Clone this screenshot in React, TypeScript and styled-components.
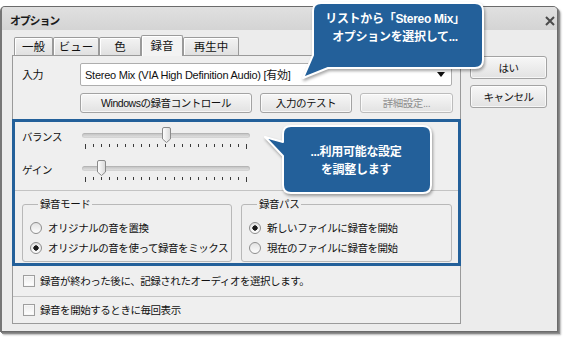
import React from "react";
import styled, { createGlobalStyle } from "styled-components";

const BLUE = "#23609a";

const GlobalStyle = createGlobalStyle`
  html, body { margin: 0; padding: 0; background: #ffffff; }
  body {
    font-family: "Liberation Sans", "Noto Sans CJK JP", sans-serif;
    font-size: 10.5px;
    letter-spacing: -0.45px;
    color: #111;
  }
  * { box-sizing: border-box; }
`;

const Page = styled.div`
  position: relative;
  width: 563px;
  height: 337px;
  padding-top: 6px;
  overflow: hidden;
`;

const Window = styled.div`
  width: 558px;
  height: 326px;
  border: 1px solid #6b6b6b;
  border-left: 2px solid #767676;
  border-radius: 5px 5px 0 0;
  background: #ececec;
  box-shadow: 1px 1px 0 #7c7c7c, 2px 2px 0 #8e8e8e, 3px 3px 2px rgba(0, 0, 0, 0.3);
  display: flex;
  flex-direction: column;
  overflow: hidden;
`;

const TitleBar = styled.div`
  height: 23px;
  flex: none;
  display: flex;
  justify-content: space-between;
  align-items: flex-start;
  padding: 6px 0 0 8px;
  background: linear-gradient(#e0e0e0, #d4d4d4);
`;

const Title = styled.div`
  font-weight: bold;
  font-size: 11px;
  letter-spacing: -1.2px;
  line-height: 16px;
  color: #1a1a1a;
`;

const CloseIcon = styled.svg`
  width: 10px;
  height: 10px;
  margin: 3px 2px 0 0;
`;

const Body = styled.div`
  flex: 1;
  display: flex;
  padding: 5px 10px 0 10px;
`;

const Main = styled.div`
  width: 449px;
  display: flex;
  flex-direction: column;
`;

const TabStrip = styled.div`
  display: flex;
  align-items: flex-end;
  height: 21px;
  padding-left: 2px;
  margin-bottom: -1px;
`;

const Tab = styled.div<{ $w: number; $active?: boolean }>`
  width: ${(p) => p.$w}px;
  height: ${(p) => (p.$active ? 21 : 19)}px;
  border: 1px solid #9a9a9a;
  border-bottom: none;
  border-radius: 2px 2px 0 0;
  background: ${(p) => (p.$active ? "#f3f3f3" : "linear-gradient(#f3f3f3, #dfdfdf)")};
  box-shadow: inset 1px 1px 0 #ffffff;
  display: flex;
  align-items: center;
  justify-content: center;
  font-size: 11.5px;
  letter-spacing: 0;
  line-height: 14px;
  position: ${(p) => (p.$active ? "relative" : "static")};
  z-index: ${(p) => (p.$active ? 2 : "auto")};
`;

const Panel = styled.div`
  position: relative;
  z-index: 1;
  height: 269px;
  border: 1px solid #9a9a9a;
  background: #efefef;
  display: flex;
  flex-direction: column;
`;

const InputRow = styled.div`
  display: flex;
  align-items: center;
  padding: 7px 0 0 9px;
`;

const FieldLabel = styled.div`
  width: 58px;
  line-height: 14px;
  font-size: 11px;
`;

const Select = styled.div`
  width: 372px;
  height: 23px;
  border: 1px solid #aeaeae;
  border-radius: 2px;
  background: #ffffff;
  display: flex;
  align-items: center;
  justify-content: space-between;
  padding: 0 6px 0 4px;
  line-height: 14px;
  font-size: 11px;
  letter-spacing: -0.25px;
`;

const Arrow = styled.svg`
  width: 8px;
  height: 5px;
`;

const ButtonRow = styled.div`
  display: flex;
  gap: 8px;
  padding-left: 67px;
  margin-top: 7px;
`;

const Button = styled.div<{ $w: number; $h?: number; $disabled?: boolean }>`
  width: ${(p) => p.$w}px;
  height: ${(p) => p.$h ?? 20}px;
  border: 1px solid ${(p) => (p.$disabled ? "#bcbcbc" : "#a3a3a3")};
  border-radius: 3px;
  background: linear-gradient(#f7f7f7, #e2e2e2);
  box-shadow: inset 0 0 0 1px rgba(255, 255, 255, 0.7);
  display: flex;
  align-items: center;
  justify-content: center;
  color: ${(p) => (p.$disabled ? "#8e8e8e" : "#111")};
  line-height: 14px;
`;

const Highlight = styled.div`
  margin: 6px -1px 0;
  height: 147px;
  border: 3px solid ${BLUE};
  display: flex;
  flex-direction: column;
`;

const SliderRow = styled.div<{ $mt: number }>`
  display: flex;
  padding-left: 7px;
  margin-top: ${(p) => p.$mt}px;
`;

const SliderLabel = styled.div`
  width: 60px;
  margin-top: 3px;
  line-height: 14px;
`;

const SliderBox = styled.div`
  position: relative;
  width: 168px;
  height: 22px;
`;

const Track = styled.div`
  margin-top: 6px;
  height: 5px;
  border-radius: 3px;
  background: linear-gradient(#bdbdbd, #e6e6e6);
  box-shadow: inset 0 0 0 1px rgba(0, 0, 0, 0.06);
`;

const Ticks = styled.div`
  display: flex;
  justify-content: space-between;
  align-items: flex-start;
  padding: 0 3px;
  margin-top: 6px;
`;

const Tick = styled.div<{ $long?: boolean }>`
  width: 1px;
  height: ${(p) => (p.$long ? 5 : 3)}px;
  background: #3a3a3a;
`;

const Thumb = styled.svg`
  position: absolute;
  top: 0;
  width: 9px;
  height: 16px;
`;

const Divider = styled.div<{ $mt?: number }>`
  height: 1px;
  flex: none;
  margin-top: ${(p) => p.$mt ?? 0}px;
  background: #c3c3c3;
`;

const Groups = styled.div`
  display: flex;
  gap: 9px;
  padding-left: 7px;
  margin-top: 6px;
`;

const Group = styled.fieldset<{ $w: number }>`
  width: ${(p) => p.$w}px;
  margin: 0;
  padding: 7px 0 3px 7px;
  border: 1px solid #b8b8b8;
  border-radius: 3px;
  min-width: 0;
`;

const Legend = styled.legend`
  margin-left: 8px;
  padding: 0 2px;
  line-height: 14px;
`;

const OptionRow = styled.div`
  height: 20px;
  display: flex;
  align-items: center;
  gap: 6px;
  line-height: 14px;
  white-space: nowrap;
`;

const Radio = styled.div<{ $on?: boolean }>`
  width: 12px;
  height: 12px;
  flex: none;
  border-radius: 50%;
  border: 1px solid #8d8d8d;
  background: ${(p) =>
    p.$on
      ? "radial-gradient(circle at 50% 50%, #1b1b1b 0 2.4px, transparent 2.9px), linear-gradient(#e2e2e2, #fdfdfd)"
      : "linear-gradient(#e2e2e2, #fdfdfd)"};
`;

const CheckRow = styled.div<{ $h?: number }>`
  height: ${(p) => (p.$h ? `${p.$h}px` : "auto")};
  flex: ${(p) => (p.$h ? "none" : 1)};
  display: flex;
  align-items: center;
  gap: 5px;
  padding-left: 10px;
  line-height: 14px;
  white-space: nowrap;
`;

const CheckBox = styled.div`
  width: 12px;
  height: 12px;
  flex: none;
  border: 1px solid #9e9e9e;
  background: linear-gradient(#ececec, #ffffff);
  box-shadow: inset 0 0 0 1px #f7f7f7;
`;

const Side = styled.div`
  display: flex;
  flex-direction: column;
  gap: 6px;
  margin-left: 9px;
  padding-top: 21px;
  width: 77px;
`;

const Callout = styled.div<{ $x: number; $y: number; $w: number; $h: number }>`
  position: absolute;
  z-index: 10;
  left: ${(p) => p.$x}px;
  top: ${(p) => p.$y}px;
  width: ${(p) => p.$w}px;
  height: ${(p) => p.$h}px;
`;

const CalloutShape = styled.svg`
  position: absolute;
  left: 0;
  top: 0;
  width: 100%;
  height: 100%;
  overflow: visible;
  filter: drop-shadow(1px 2px 1.5px rgba(0, 0, 0, 0.35));
`;

const CalloutText = styled.div<{ $left: number; $w: number; $top: number }>`
  position: relative;
  margin-left: ${(p) => p.$left}px;
  width: ${(p) => p.$w}px;
  padding-top: ${(p) => p.$top}px;
  text-align: center;
  color: #ffffff;
  font-weight: bold;
  font-size: 12px;
  letter-spacing: -0.3px;
  line-height: 18px;
  white-space: nowrap;
`;

const TICKS = Array.from({ length: 21 }, (_, i) => i);

function Slider({ pos }: { pos: number }) {
  const left = 3 + (pos * 162) / 20 - 4;
  return (
    <SliderBox>
      <Track />
      <Ticks>
        {TICKS.map((i) => (
          <Tick key={i} $long={i === 0 || i === 20} />
        ))}
      </Ticks>
      <Thumb viewBox="0 0 9 16" style={{ left }}>
        <defs>
          <linearGradient id={`tg${pos}`} x1="0" y1="0" x2="1" y2="0">
            <stop offset="0" stopColor="#ffffff" />
            <stop offset="1" stopColor="#d9d9d9" />
          </linearGradient>
        </defs>
        <path
          d="M0.5 2 Q0.5 0.5 2 0.5 H7 Q8.5 0.5 8.5 2 V12 L4.5 15.5 L0.5 12 Z"
          fill={`url(#tg${pos})`}
          stroke="#8a8a8a"
        />
      </Thumb>
    </SliderBox>
  );
}

export default function App() {
  return (
    <Page>
      <GlobalStyle />
      <Window>
        <TitleBar>
          <Title>オプション</Title>
          <CloseIcon viewBox="0 0 10 10">
            <path d="M1 1 L9 9 M9 1 L1 9" stroke="#4a4a4a" strokeWidth="2" />
          </CloseIcon>
        </TitleBar>
        <Body>
          <Main>
            <TabStrip>
              <Tab $w={39}>一般</Tab>
              <Tab $w={46}>ビュー</Tab>
              <Tab $w={42}>色</Tab>
              <Tab $w={42} $active>
                録音
              </Tab>
              <Tab $w={56}>再生中</Tab>
            </TabStrip>
            <Panel>
              <InputRow>
                <FieldLabel>入力</FieldLabel>
                <Select>
                  <span>Stereo Mix (VIA High Definition Audio) [有効]</span>
                  <Arrow viewBox="0 0 8 5">
                    <path d="M0 0 H8 L4 5 Z" fill="#111" />
                  </Arrow>
                </Select>
              </InputRow>
              <ButtonRow>
                <Button $w={172}>Windowsの録音コントロール</Button>
                <Button $w={92}>入力のテスト</Button>
                <Button $w={93} $disabled>
                  詳細設定...
                </Button>
              </ButtonRow>
              <Highlight>
                <SliderRow $mt={5}>
                  <SliderLabel>バランス</SliderLabel>
                  <Slider pos={10} />
                </SliderRow>
                <SliderRow $mt={11}>
                  <SliderLabel>ゲイン</SliderLabel>
                  <Slider pos={2} />
                </SliderRow>
                <Divider $mt={8} />
                <Groups>
                  <Group $w={210}>
                    <Legend>録音モード</Legend>
                    <OptionRow>
                      <Radio />
                      オリジナルの音を置換
                    </OptionRow>
                    <OptionRow>
                      <Radio $on />
                      オリジナルの音を使って録音をミックス
                    </OptionRow>
                  </Group>
                  <Group $w={211}>
                    <Legend>録音パス</Legend>
                    <OptionRow>
                      <Radio $on />
                      新しいファイルに録音を開始
                    </OptionRow>
                    <OptionRow>
                      <Radio />
                      現在のファイルに録音を開始
                    </OptionRow>
                  </Group>
                </Groups>
              </Highlight>
              <CheckRow $h={30}>
                <CheckBox />
                録音が終わった後に、記録されたオーディオを選択します。
              </CheckRow>
              <Divider />
              <CheckRow>
                <CheckBox />
                録音を開始するときに毎回表示
              </CheckRow>
            </Panel>
          </Main>
          <Side>
            <Button $w={77} $h={23}>
              はい
            </Button>
            <Button $w={77} $h={23}>
              キャンセル
            </Button>
          </Side>
        </Body>
      </Window>

      <Callout $x={300} $y={0} $w={188} $h={82}>
        <CalloutShape viewBox="0 0 188 82">
          <path
            d="M21 3 H175 Q183 3 183 11 V60 Q183 68 175 68 H28 L3 78 L13 55 V11 Q13 3 21 3 Z"
            fill={BLUE}
            stroke="#ffffff"
            strokeWidth="2"
            strokeLinejoin="round"
          />
        </CalloutShape>
        <CalloutText $left={13} $w={164} $top={10}>
          リストから「Stereo Mix」
          <br />
          オプションを選択して...
        </CalloutText>
      </Callout>

      <Callout $x={260} $y={122} $w={176} $h={76}>
        <CalloutShape viewBox="0 0 176 76">
          <path
            d="M31 4 H163 Q171 4 171 12 V63 Q171 71 163 71 H31 Q23 71 23 63 V34 L5 15 L23 20 V12 Q23 4 31 4 Z"
            fill={BLUE}
            stroke="#ffffff"
            strokeWidth="2"
            strokeLinejoin="round"
          />
        </CalloutShape>
        <CalloutText $left={23} $w={146} $top={21}>
          ...利用可能な設定
          <br />
          を調整します
        </CalloutText>
      </Callout>
    </Page>
  );
}
